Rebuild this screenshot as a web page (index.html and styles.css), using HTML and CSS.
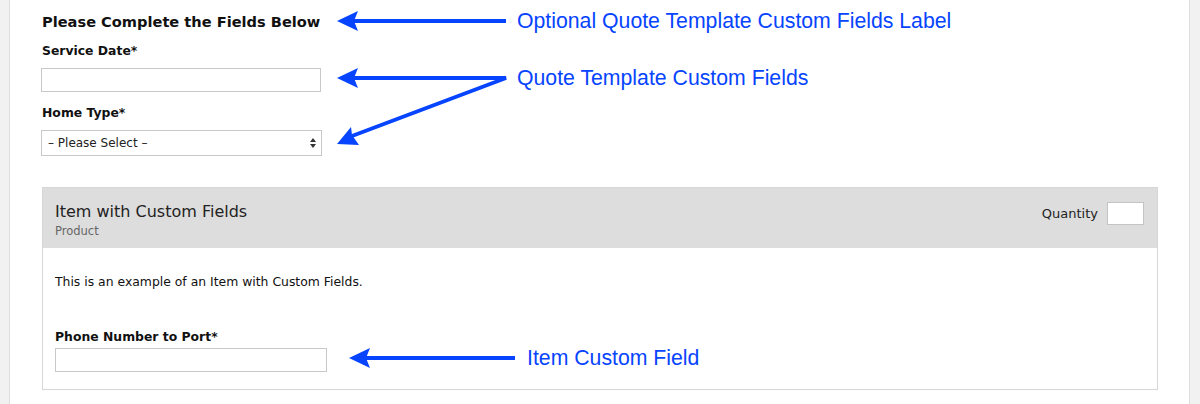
FILE: index.html
```html
<!DOCTYPE html>
<html lang="en">
<head>
    <meta charset="UTF-8">
    <meta name="viewport" content="width=device-width, initial-scale=1.0">
    <title>Quote Template Custom Fields</title>
    <link rel="stylesheet" href="styles.css">
</head>
<body>
    <div class="page">
        <section class="quote-fields">
            <h2>Please Complete the Fields Below</h2>
            <div class="field">
                <label for="serviceDate">Service Date*</label>
                <input type="text" id="serviceDate">
            </div>
            <div class="field">
                <label for="homeType">Home Type*</label>
                <select id="homeType">
                    <option>&ndash; Please Select &ndash;</option>
                </select>
            </div>
        </section>

        <div class="item">
            <div class="item-head">
                <div>
                    <div class="item-title">Item with Custom Fields</div>
                    <div class="item-type">Product</div>
                </div>
                <label class="qty">Quantity <input type="text"></label>
            </div>
            <div class="item-body">
                <p>This is an example of an Item with Custom Fields.</p>
                <div class="field">
                    <label for="phonePort">Phone Number to Port*</label>
                    <input type="text" id="phonePort" class="wide">
                </div>
            </div>
        </div>
    </div>

    <!-- annotation layer -->
    <svg class="notes" width="1200" height="404" viewBox="0 0 1200 404">
        <g fill="#0644ff" stroke="#0644ff">
            <line x1="506" y1="21" x2="352" y2="21" stroke-width="4"/>
            <polygon points="337,21 358,11 354,21 358,31" stroke="none"/>

            <polyline points="352,78 506,78 352,136" fill="none" stroke-width="4"/>
            <polygon points="337,78 358,68 354,78 358,88" stroke="none"/>
            <polygon points="337,144 351,127 352,135 359,145" stroke="none"/>

            <line x1="515" y1="358" x2="364" y2="358" stroke-width="4"/>
            <polygon points="349,358 370,348 366,358 370,368" stroke="none"/>
        </g>
        <g class="note-text">
            <text x="517" y="28">Optional Quote Template Custom Fields Label</text>
            <text x="517" y="85">Quote Template Custom Fields</text>
            <text x="527" y="365">Item Custom Field</text>
        </g>
    </svg>
</body>
</html>
```

FILE: styles.css
```css
body {
    margin: 0;
    background-color: #f1f1f1;
    font-family: "DejaVu Sans", Verdana, sans-serif;
    color: #111;
    height: 404px;
    overflow: hidden;
    position: relative;
}
.page {
    margin-left: 9px;
    width: 1181px;
    height: 404px;
    background-color: #fff;
    border-left: 1px solid #dedede;
    border-right: 1px solid #dedede;
    padding: 13px 31px 0 32px;
    box-sizing: border-box;
}
h2 {
    font-size: 14.6px;
    font-weight: bold;
    margin: 0 0 13px;
}
.field label {
    display: block;
    font-size: 12.4px;
    font-weight: bold;
    margin-bottom: 10px;
}
.field input,
.field select {
    display: block;
    width: 280px;
    height: 24px;
    box-sizing: border-box;
    border: 1px solid #c8c8c8;
    margin: 0 0 13px -1px;
    font-family: inherit;
}
.field select {
    width: 281px;
    height: 26px;
    appearance: none;
    border-radius: 0;
    background: #fff url("data:image/svg+xml;utf8,<svg xmlns='http://www.w3.org/2000/svg' width='6' height='10'><path d='M3 0 L6 4 H0Z M0 6 H6 L3 10Z' fill='%23333'/></svg>") no-repeat right 5px center;
    font-size: 12px;
    padding-left: 6px;
    color: #222;
}
.item {
    margin-top: 31px;
    border: 1px solid #d6d6d6;
    height: 203px;
    box-sizing: border-box;
}
.item-head {
    background-color: #dddddd;
    height: 60px;
    display: flex;
    justify-content: space-between;
    align-items: flex-start;
    padding: 14px 13px 0 12px;
    box-sizing: border-box;
}
.item-title {
    font-size: 16px;
    color: #222;
}
.item-type {
    font-size: 11.5px;
    color: #666;
    margin-top: 3px;
}
.qty {
    display: flex;
    align-items: center;
    gap: 9px;
    font-size: 13px;
    color: #222;
}
.qty input {
    width: 37px;
    height: 23px;
    box-sizing: border-box;
    border: 1px solid #c4c4c4;
}
.item-body {
    padding: 26px 12px 0;
}
.item-body p {
    font-size: 12.4px;
    margin: 0 0 40px;
}
.item-body .field label {
    margin-bottom: 4px;
}
.field input.wide {
    width: 272px;
    margin-left: 0;
}
.notes {
    position: absolute;
    left: 0;
    top: 0;
}
.note-text text {
    font-family: "Liberation Sans", Arial, sans-serif;
    font-size: 21.25px;
    fill: #0644ff;
}
```
